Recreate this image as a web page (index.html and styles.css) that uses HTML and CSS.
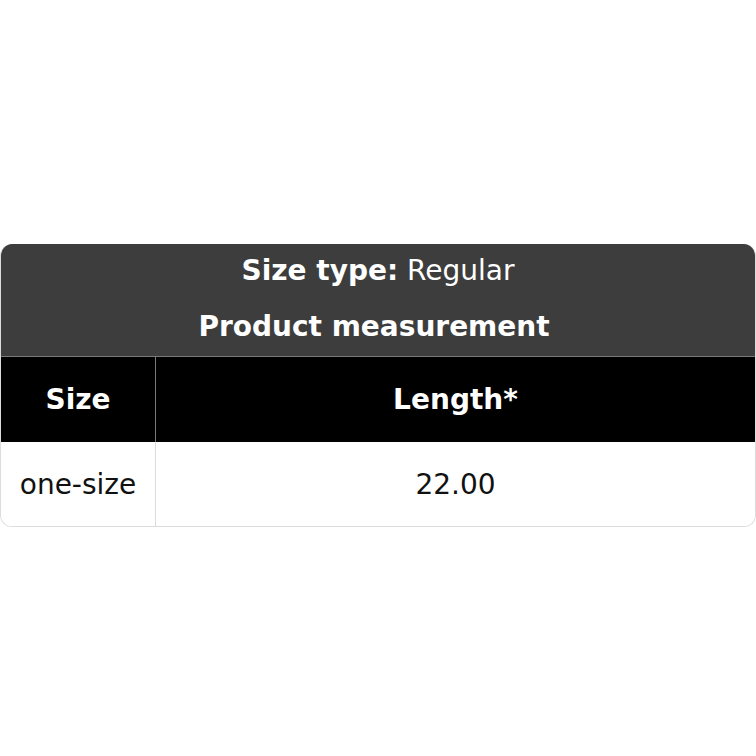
FILE: index.html
```html
<!DOCTYPE html>
<html>
<head>
<meta charset="utf-8">
<link rel="stylesheet" href="styles.css">
</head>
<body>
<div class="page">
  <div class="card">
    <div class="head">
      <div class="line"><b>Size type:</b> Regular</div>
      <div class="line title"><b>Product measurement</b></div>
    </div>
    <div class="row hrow">
      <div class="cell c1">Size</div>
      <div class="cell c2">Length*</div>
    </div>
    <div class="row brow">
      <div class="cell c1">one-size</div>
      <div class="cell c2">22.00</div>
    </div>
  </div>
</div>
</body>
</html>
```
FILE: styles.css
```css
html, body { margin: 0; padding: 0; background: #fff; }
body { font-family: "DejaVu Sans", sans-serif; }
.page { width: 756px; height: 756px; box-sizing: border-box; padding-top: 244px; }
.card {
  width: 756px;
  box-sizing: border-box;
  border: 1px solid #dcdcdc;
  border-top: none;
  border-radius: 12px;
  overflow: hidden;
}
.head {
  background: #3d3d3d;
  color: #fff;
  font-size: 28px;
  text-align: center;
  padding: 11px 0 13px;
  display: flex;
  flex-direction: column;
  gap: 24px;
  border-bottom: 1px solid #7a7a7a;
}
.line { line-height: 32px; }
.title { padding-right: 8px; }
.row { display: grid; grid-template-columns: 155px 1fr; font-size: 28px; }
.cell { display: flex; align-items: center; justify-content: center; height: 85px; }
.c1 { border-right: 1px solid #7a7a7a; }
.hrow { background: #000; color: #fff; font-weight: bold; }
.brow { background: #fff; color: #111; }
.brow .c1 { border-right-color: #dcdcdc; height: 84px; }
.brow .c2 { height: 84px; }
```
